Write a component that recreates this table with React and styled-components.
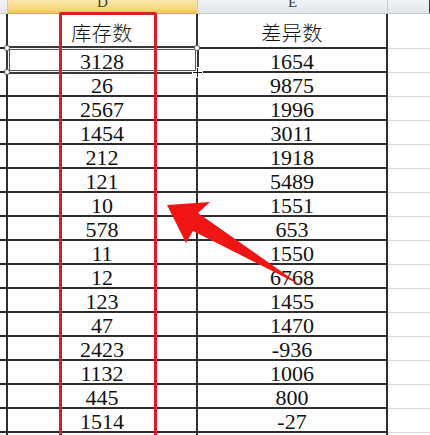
import React from "react";
import styled, { createGlobalStyle } from "styled-components";

const GlobalStyle = createGlobalStyle`
  html, body { margin: 0; padding: 0; background: #ffffff; overflow: hidden; }
  #root { width: 430px; height: 435px; }
`;

const Sheet = styled.div`
  position: relative;
  width: 430px;
  height: 435px;
  overflow: hidden;
  background: #ffffff;
`;

const Grid = styled.div`
  display: grid;
  grid-template-columns: 8px 190px 190px 42px 1fr;
  grid-template-rows: 14px 35px;
  grid-auto-rows: 24px;
`;

const HeaderCell = styled.div`
  box-sizing: border-box;
  display: flex;
  align-items: flex-end;
  justify-content: center;
  overflow: hidden;
  background: ${(p) =>
    p.$selected
      ? "linear-gradient(#fbe6ad, #f8d886 65%, #f2c45c)"
      : "linear-gradient(#f1f3f6, #e2e6eb)"};
  border-bottom: 1px solid ${(p) => (p.$selected ? "#e2b049" : "#c4c9cf")};
  border-right: 1px solid ${(p) => (p.$edge ? "#3a3a3a" : "#c8ccd2")};
  color: #3c3c3c;
  font-family: "Liberation Serif", "DejaVu Serif", serif;
  font-size: 15px;
`;

const HeaderLetter = styled.span`
  line-height: 15px;
  margin-bottom: 3px;
`;

const Cell = styled.div`
  box-sizing: border-box;
  display: flex;
  align-items: flex-end;
  justify-content: center;
  overflow: hidden;
  border-bottom: ${(p) => (p.$outside ? "1px solid #d9dadc" : "2px solid #2e2e2e")};
  border-right: ${(p) => (p.$outside ? "none" : "2px solid #2e2e2e")};
  color: #111111;
  font-family: "Liberation Serif", "DejaVu Serif", serif;
  font-size: 22px;
  line-height: 18px;
  white-space: nowrap;
`;

const TitleText = styled.span`
  font-family: "Noto Sans CJK SC", "Noto Sans", sans-serif;
  font-size: 20px;
  font-weight: 300;
  line-height: 24px;
  margin-bottom: 2px;
  letter-spacing: 0.5px;
`;

const Selection = styled.div`
  position: absolute;
  left: 6px;
  top: 46px;
  width: 193px;
  height: 28px;
  box-sizing: border-box;
  border: 2px solid #383838;
  box-shadow: inset 0 0 0 1px #f4f4f4, inset 0 0 0 2px #555555;
  pointer-events: none;
`;

const Knob = styled.div`
  position: absolute;
  left: ${(p) => p.$x - 2}px;
  top: ${(p) => p.$y - 2}px;
  width: 4px;
  height: 4px;
  border-radius: 50%;
  background: #ffffff;
  box-shadow: 0 0 0 1px #6a6a6a;
`;

const Cursor = styled.svg`
  position: absolute;
  left: 192px;
  top: 67px;
  width: 11px;
  height: 11px;
`;

const RedFrame = styled.div`
  position: absolute;
  left: 59px;
  top: 12px;
  width: 98px;
  height: 440px;
  box-sizing: border-box;
  border: 3px solid #d2212b;
  border-radius: 2px;
  pointer-events: none;
`;

const Arrow = styled.svg`
  position: absolute;
  left: 0;
  top: 0;
  width: 430px;
  height: 435px;
  pointer-events: none;
`;

const D = [3128, 26, 2567, 1454, 212, 121, 10, 578, 11, 12, 123, 47, 2423, 1132, 445, 1514];
const E = [1654, 9875, 1996, 3011, 1918, 5489, 1551, 653, 1550, 6768, 1455, 1470, -936, 1006, 800, -27];

export default function App() {
  const rows = D.map((d, i) => ({ d, e: E[i] }));
  rows.push({ d: "", e: "" });
  return (
    <Sheet>
      <GlobalStyle />
      <Grid>
        <HeaderCell />
        <HeaderCell $selected>
          <HeaderLetter>D</HeaderLetter>
        </HeaderCell>
        <HeaderCell>
          <HeaderLetter>E</HeaderLetter>
        </HeaderCell>
        <HeaderCell $edge />
        <HeaderCell />

        <Cell />
        <Cell>
          <TitleText>库存数</TitleText>
        </Cell>
        <Cell>
          <TitleText>差异数</TitleText>
        </Cell>
        <Cell $outside />
        <Cell $outside />

        {rows.map((r, i) => (
          <React.Fragment key={i}>
            <Cell />
            <Cell>{r.d}</Cell>
            <Cell>{r.e}</Cell>
            <Cell $outside />
            <Cell $outside />
          </React.Fragment>
        ))}
      </Grid>

      <Selection />
      <Knob $x={7} $y={48} />
      <Knob $x={7} $y={72} />
      <Knob $x={197} $y={48} />
      <Cursor viewBox="0 0 11 11">
        <path d="M4 0h3v4h4v3H7v4H4V7H0V4h4z" fill="#ffffff" />
        <path d="M5 1h1v4h4v1H6v4H5V6H1V5h4z" fill="#111111" />
      </Cursor>

      <RedFrame />

      <Arrow viewBox="0 0 430 435">
        <polygon
          points="167,205 210,202 198,213 302,286 193,231 186,243"
          fill="#f01414"
        />
      </Arrow>
    </Sheet>
  );
}
